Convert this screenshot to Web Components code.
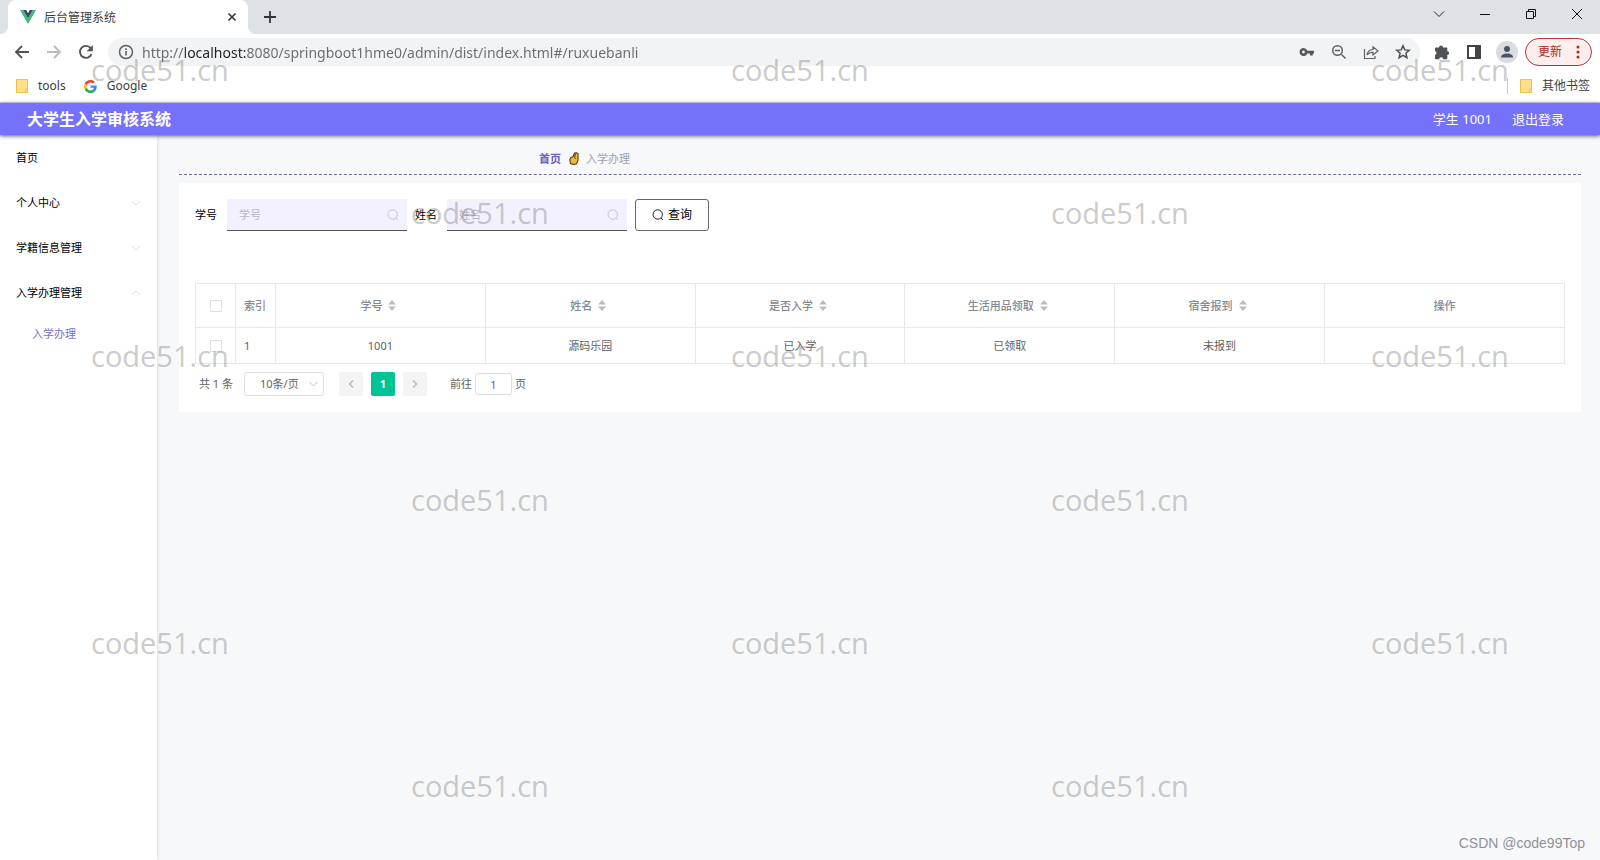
<!DOCTYPE html>
<html lang="zh-CN">
<head>
<meta charset="utf-8">
<title>后台管理系统</title>
<style>
html { height: 100%; }
body {
  margin: 0; min-height: 100%; display: flex; flex-direction: column; position: relative;
  background: #f7f8fa; color: #000;
  font: 11px/16px "Noto Sans", "Noto Sans CJK SC", sans-serif;
}
.workspace { flex: 1; display: flex; }
page-main { flex: 1; min-width: 0; }
</style>
</head>
<body>
<tab-strip><span slot="title">后台管理系统</span></tab-strip>
<tool-bar url="http://localhost:8080/springboot1hme0/admin/dist/index.html#/ruxuebanli"></tool-bar>
<bookmark-bar></bookmark-bar>
<app-header>大学生入学审核系统<span slot="user">学生 1001</span><a slot="logout" href="#logout">退出登录</a></app-header>
<div class="workspace">
  <side-menu>
    <menu-item>首页</menu-item>
    <menu-item arrow="down">个人中心</menu-item>
    <menu-item arrow="down">学籍信息管理</menu-item>
    <menu-item arrow="up">入学办理管理</menu-item>
    <menu-item level="2">入学办理</menu-item>
  </side-menu>
  <page-main>
    <bread-crumb slot="crumb"><a slot="home" href="#home">首页</a>入学办理</bread-crumb>
    <search-form></search-form>
    <data-grid></data-grid>
    <page-nav></page-nav>
  </page-main>
</div>
<water-mark></water-mark>

<script>
const base = '*{box-sizing:border-box}button,input,select{font:inherit;color:inherit;margin:0}button{padding:0;border:0;background:none}a{color:inherit;text-decoration:none}svg{display:block;flex:none}';
function define(name, html) {
  customElements.define(name, class extends HTMLElement {
    constructor() {
      super();
      const t = document.createElement('template');
      t.innerHTML = typeof html === 'function' ? html(this) : html;
      this.attachShadow({ mode: 'open' }).append(t.content.cloneNode(true));
    }
  });
}

define('tab-strip', `<style>${base}
:host{display:flex;height:34px;background:#dee1e6;color:#3c4043;padding-left:8px;font-size:12px}
.tab{width:240px;display:flex;align-items:center;background:#fff;border-radius:8px 8px 0 0;padding:0 10px 0 12px;position:relative}
.tab::after,.tab::before{content:"";position:absolute;bottom:0;width:8px;height:8px}
.tab::before{right:100%;background:radial-gradient(circle at 0 0,transparent 8px,#fff 8px)}
.tab::after{left:100%;background:radial-gradient(circle at 100% 0,transparent 8px,#fff 8px)}
.name{flex:1;padding:2px 0 0 8px}
.tab button{width:12px}
.add{width:14px;margin-left:15px}
.win{margin-left:auto;display:flex;gap:34px;padding-right:17px;height:28px;align-items:center}
.win button{width:12px}
</style>
<div class="tab">
<svg width="16" height="14" viewBox="0 0 16 14"><path fill="#41b883" d="M0 0h3.200L8 8.300 12.800 0H16L8 14z"/><path fill="#35495e" d="M3.200 0h3L8 3.200 9.800 0h3L8 8.300z"/></svg>
<span class="name"><slot name="title"></slot></span>
<button aria-label="关闭标签页"><svg width="12" height="12"><path d="M2.500 2.500l7 7M9.500 2.500l-7 7" stroke="#333" stroke-width="1.600"/></svg></button>
</div>
<button class="add" aria-label="新标签页"><svg width="14" height="14"><path d="M7 1v12M1 7h12" stroke="#333" stroke-width="1.800"/></svg></button>
<div class="win">
<button aria-label="搜索标签页"><svg width="12" height="12"><path d="M1 3.500l5 5 5-5" fill="none" stroke="#222"/></svg></button>
<button aria-label="最小化"><svg width="12" height="12"><path d="M1 6.500h10" stroke="#111"/></svg></button>
<button aria-label="还原"><svg width="12" height="12"><path d="M1.500 3.500h7v7h-7zM3.500 3V1.500h7v7H9" fill="none" stroke="#111"/></svg></button>
<button aria-label="关闭"><svg width="12" height="12"><path d="M1 1l10 10M11 1L1 11" stroke="#111"/></svg></button>
</div>`);

define('tool-bar', el => `<style>${base}
:host{display:flex;align-items:center;height:36px;background:#fff;padding:0 8px 0 14px;color:#5f6368}
.nav{display:flex;gap:16px;margin-right:14px}
.nav button{width:16px}
.box{flex:1;display:flex;align-items:center;height:28px;border-radius:14px;background:#f1f3f4;padding:0 9px 0 10px}
.box input{flex:1;min-width:0;border:0;outline:0;padding:0;margin-left:8px;height:24px;font-size:14px;
-webkit-text-fill-color:transparent;background:linear-gradient(90deg,#686c70 43px,#202124 43px,#202124 103px,#686c70 103px);-webkit-background-clip:text;background-clip:text}
.acts{display:flex;gap:16px}
.ext{display:flex;align-items:center;gap:16px;margin-left:14px}
.me{width:22px;height:22px;border-radius:11px;background:#dadce0;display:grid;place-items:center;margin-left:-2px}
.up{display:flex;align-items:center;justify-content:space-between;width:67px;height:28px;border:1px solid #b3363a;border-radius:14px;background:#fbeeed;color:#b3261e;font-size:12px;padding:0 11px 0 12px;margin-left:-9px}
</style>
<div class="nav">
<button aria-label="后退"><svg width="16" height="16"><path d="M15 8H2.500M8 2L2 8l6 6" fill="none" stroke="#505357" stroke-width="1.800"/></svg></button>
<button aria-label="前进"><svg width="16" height="16"><path d="M1 8h12.500M8 2l6 6-6 6" fill="none" stroke="#b8babd" stroke-width="1.800"/></svg></button>
<button aria-label="刷新"><svg width="16" height="16"><path d="M13.500 10.200A6 6 0 1 1 12.600 4L14 5.500" fill="none" stroke="#505357" stroke-width="1.900"/><path d="M14.800 1v6.200H8.600z" fill="#505357"/></svg></button>
</div>
<div class="box">
<svg width="16" height="16"><circle cx="8" cy="8" r="6.500" fill="none" stroke="#5f6368" stroke-width="1.500"/><path d="M8 7v4.500M8 4.300v1.600" stroke="#5f6368" stroke-width="1.600"/></svg>
<input aria-label="地址栏" value="${el.getAttribute('url')}">
<div class="acts">
<button aria-label="密码"><svg width="16" height="16"><path fill="#55585c" fill-rule="evenodd" d="M4.500 4a4 4 0 0 1 3.800 2.700H15v2.800h-1.200v2h-2.900v-2H8.300A4 4 0 1 1 4.500 4zm0 2.600a1.400 1.400 0 1 0 0 2.800 1.400 1.400 0 0 0 0-2.800z"/></svg></button>
<button aria-label="缩放"><svg width="16" height="16"><path d="M10.500 10.500l4 4M4 6.500h5" stroke="#5f6368" stroke-width="1.500"/><circle cx="6.500" cy="6.500" r="4.800" fill="none" stroke="#5f6368" stroke-width="1.500"/></svg></button>
<button aria-label="分享"><svg width="16" height="16"><path d="M1.500 5v9.500h10.500V12M4 11c.5-3.500 2.500-5.300 6-5.500V2.700L15 7l-5 4V8.300C7.500 8.300 5.500 9 4 11z" fill="none" stroke="#5f6368" stroke-width="1.200"/></svg></button>
<button aria-label="收藏"><svg width="16" height="16"><path d="M8 1.800l1.800 4.100 4.500.4-3.400 2.900 1 4.400L8 11.300l-3.900 2.300 1-4.400L1.700 6.300l4.500-.4z" fill="none" stroke="#4b4f54" stroke-width="1.500"/></svg></button>
</div></div>
<div class="ext">
<button aria-label="扩展程序"><svg width="16" height="16"><path fill="#505357" d="M5 3.400a2 2 0 0 1 4 0h3.300c.6 0 1 .4 1 1V7.200a1.900 1.900 0 0 1 0 3.800v3.200c0 .6-.4 1-1 1H9.200a2 2 0 0 0-4 0H2c-.6 0-1-.4-1-1V11a2 2 0 0 0 0-3.900V4.400c0-.6.4-1 1-1z"/></svg></button>
<button aria-label="侧边栏"><svg width="16" height="16"><path fill="#444" fill-rule="evenodd" d="M1 1h14v14H1zm2 2v10h6V3z"/></svg></button>
<button class="me" aria-label="用户"><svg width="14" height="14"><circle cx="7" cy="4" r="3" fill="#4a5468"/><path d="M1 12.500c0-3 3-4 6-4s6 1 6 4z" fill="#4a5468"/></svg></button>
<button class="up">更新<svg width="4" height="14"><g fill="#b3261e"><circle cx="2" cy="2" r="1.500"/><circle cx="2" cy="7" r="1.500"/><circle cx="2" cy="12" r="1.500"/></g></svg></button>
</div>`);

const folder = '<svg width="12" height="14"><path d="M.5.500h11v13H.500z" fill="#fde088" stroke="#e8c04e"/><path d="M9.500 13.500v-3l2-1" fill="none" stroke="#e8c04e"/></svg>';
define('bookmark-bar', `<style>${base}
:host{display:flex;align-items:center;box-sizing:border-box;height:33px;background:#fff;border-bottom:1px solid #dcdcea;padding:0 10px 0 16px;color:#3c4043;font-size:12px}
a{display:flex;align-items:center;gap:10px}
a+a{margin-left:18px}
.other{padding-left:12px;border-left:1px solid #ccc;height:16px}
a+a.other{margin-left:auto}
</style>
<a href="#tools">${folder}tools</a>
<a href="#google"><svg width="13" height="13" viewBox="0 0 48 48"><path fill="#EA4335" d="M24 9.500c3.540 0 6.710 1.220 9.210 3.600l6.850-6.850C35.900 2.380 30.470 0 24 0 14.620 0 6.510 5.380 2.560 13.220l7.980 6.190C12.430 13.720 17.740 9.500 24 9.500z"/><path fill="#4285F4" d="M46.980 24.550c0-1.570-.15-3.090-.38-4.550H24v9.020h12.940c-.58 2.960-2.260 5.480-4.780 7.180l7.730 6c4.510-4.180 7.090-10.360 7.090-17.650z"/><path fill="#FBBC05" d="M10.530 28.590c-.48-1.450-.76-2.990-.76-4.590s.27-3.140.76-4.590l-7.980-6.190C.92 16.460 0 20.120 0 24s.92 7.540 2.560 10.780z"/><path fill="#34A853" d="M24 48c6.480 0 11.930-2.130 15.890-5.810l-7.730-6c-2.150 1.450-4.920 2.300-8.160 2.300-6.260 0-11.570-4.220-13.470-9.910l-7.980 6.190C6.510 42.620 14.620 48 24 48z"/></svg>Google</a>
<a class="other" href="#other">${folder}其他书签</a>`);

define('app-header', `<style>${base}
:host{display:flex;align-items:center;height:32px;background:#7571f9;color:#fff;padding:0 36px 0 27px;position:relative;box-shadow:0 1px 4px rgba(30,30,80,.75)}
h1{margin:0;flex:1;font-size:16px;line-height:24px;font-weight:700}
.right{display:flex;gap:20px;font-size:13px}
::slotted(a){color:inherit;text-decoration:none}
</style><h1><slot></slot></h1><div class="right"><slot name="user"></slot><slot name="logout"></slot></div>`);

define('side-menu', `<style>:host{display:block;width:157px;background:#fff;box-shadow:1px 0 3px rgba(0,0,0,.1)}</style><nav><slot></slot></nav>`);

define('menu-item', el => {
  const a = el.getAttribute('arrow');
  return `<style>${base}
:host{display:block}
:host([level="2"]) a{height:38px;padding-left:32px;color:#7571c9}
a{display:flex;align-items:center;justify-content:space-between;height:45px;padding:0 16px}
</style><a href="#menu"><slot></slot>${a ? `<svg width="10" height="6"><path d="${a === 'up' ? 'M1 5l4-4 4 4' : 'M1 1l4 4 4-4'}" fill="none" stroke="#dcdee3"/></svg>` : ''}</a>`;
});

define('page-main', `<style>:host{display:block;padding:0 19px 0 22px}
.card{background:#fff;margin-top:8px;padding:16px}
</style><slot name="crumb"></slot><div class="card"><slot></slot></div>`);

define('bread-crumb', `<style>${base}
:host{display:flex;align-items:center;box-sizing:border-box;height:40px;padding:8px 0 0 360px;border-bottom:1px dashed #6d6a99;color:#9aa2b5}
svg{margin:0 7px 0 8px}
::slotted(a){color:#6a62bd;font-weight:600;text-decoration:none}
</style><slot name="home"></slot>
<svg width="10" height="13"><path d="M1.500 11.500L.800 7.500 2 5.500 4 4.800 5.500 1 7.500.800 9 1.500 9 8.500 7.500 11.800 4.500 12.500z" fill="#efb93a" stroke="#4d3c1c" stroke-width="1.100"/><path d="M6.500 2L5.500 5.500 6.800 7" fill="none" stroke="#4d3c1c"/></svg>
<slot></slot>`);

const lens = (c, s) => `<svg width="${s}" height="${s}" viewBox="0 0 12 12"><circle cx="5.700" cy="5.500" r="4.700" fill="none" stroke="${c}"/><path d="M9 9l2 2" stroke="${c}"/></svg>`;
define('search-form', `<style>${base}
form{display:flex;align-items:center;height:32px;gap:8px}
label{width:24px;white-space:nowrap}
.f{display:flex;align-items:center;gap:8px}
.field{display:flex;align-items:center;width:180px;height:32px;background:#f3f1ff;border-bottom:1px solid #555;padding:0 8px 0 12px}
input{flex:1;min-width:0;border:0;outline:0;background:none;padding:0;height:24px}
input::placeholder{color:#b6b6c6}
button{display:flex;align-items:center;justify-content:center;gap:4px;width:74px;height:32px;border:1px solid #666;border-radius:3px;background:#fff;font-size:12px}
</style><form>
<div class="f"><label for="no">学号</label><div class="field"><input id="no" placeholder="学号">${lens('#c3c3d2', 12)}</div></div>
<div class="f"><label for="nm">姓名</label><div class="field"><input id="nm" placeholder="姓名">${lens('#c3c3d2', 12)}</div></div>
<button type="button">${lens('#222', 12)}查询</button></form>`);

const sort = '<svg width="8" height="11"><path d="M4 0l4 4.500H0zM4 11l4-4.500H0z" fill="#b9bcc4"/></svg>';
const heads = ['学号', '姓名', '是否入学', '生活用品领取', '宿舍报到'];
define('data-grid', `<style>${base}
:host{display:block;margin-top:52px}
table{width:100%;table-layout:fixed;border-collapse:collapse;color:#606266;text-align:center}
th,td{border:1px solid #e8e8ec;padding:0}
th{height:44px;font-weight:500;color:#85888e}
td{height:36px}
.c{width:40px}.o{width:240px}
.l{text-align:left;padding-left:8px}
.s{display:flex;align-items:center;justify-content:center;gap:6px;padding-right:4px}
input{appearance:none;display:block;width:12px;height:12px;border:1px solid #dcdfe6;border-radius:1px;background:#fff;margin:0 auto}
</style><table>
<colgroup><col class="c"><col class="c"><col><col><col><col><col><col class="o"></colgroup>
<thead><tr><th><input type="checkbox" aria-label="全选"></th><th class="l">索引</th>${heads.map(h => `<th><span class="s">${h}${sort}</span></th>`).join('')}<th>操作</th></tr></thead>
<tbody><tr><td><input type="checkbox" aria-label="选择此行"></td><td class="l">1</td><td>1001</td><td>源码乐园</td><td>已入学</td><td>已领取</td><td>未报到</td><td></td></tr></tbody></table>`);

define('page-nav', `<style>${base}
:host{display:flex;align-items:center;height:24px;margin-top:8px;padding-left:4px;color:#606266}
.sel{position:relative;width:80px;margin:0 15px 0 11px}
select{appearance:none;width:100%;height:24px;border:1px solid #dcdfe6;border-radius:3px;background:#fff;padding:0 20px 0 15px}
.sel svg{position:absolute;right:6px;top:9px}
.pg{display:flex;gap:8px;margin-right:23px}
.pg button{width:24px;height:24px;background:#f4f4f5;border-radius:2px;display:grid;place-items:center}
.pg .on{background:#00c292;color:#fff;font-weight:700}
label{display:flex;align-items:center;gap:3px}
label input{width:37px;height:22px;border:1px solid #dcdfe6;border-radius:3px;text-align:center;padding:0}
</style><span>共 1 条</span>
<div class="sel"><select aria-label="每页条数"><option>10条/页</option></select><svg width="9" height="6"><path d="M.5 1l4 4 4-4" fill="none" stroke="#c0c4cc"/></svg></div>
<div class="pg"><button aria-label="上一页"><svg width="6" height="8"><path d="M5 .5L1.500 4 5 7.500" fill="none" stroke="#b4b8c0" stroke-width="1.300"/></svg></button><button class="on">1</button><button aria-label="下一页"><svg width="6" height="8"><path d="M1 .5L4.500 4 1 7.500" fill="none" stroke="#b4b8c0" stroke-width="1.300"/></svg></button></div>
<label>前往<input value="1">页</label>`);

define('water-mark', `<style>
:host{position:absolute;inset:0;overflow:hidden;pointer-events:none;display:grid;grid-template-rows:repeat(6,1fr);font-family:"Open Sans",sans-serif;font-size:29px;line-height:40px;color:rgba(120,120,120,.4)}
.r{display:flex;align-items:center;padding:0 0 4px 91px;white-space:nowrap}
.r:nth-of-type(even){padding-left:411px}
.r span{flex:0 0 140px;margin-right:500px}
.r span:last-child{margin-right:0}
.credit{position:absolute;right:15px;bottom:8px;font:14px/18px "Liberation Sans",sans-serif;color:#8e9095;text-shadow:0 0 1px #fff}
</style>${[3, 2, 3, 2, 3, 2].map(n => `<div class="r">${'<span>code51.cn</span>'.repeat(n)}</div>`).join('')}<div class="credit">CSDN @code99Top</div>`);
</script>
</body>
</html>
